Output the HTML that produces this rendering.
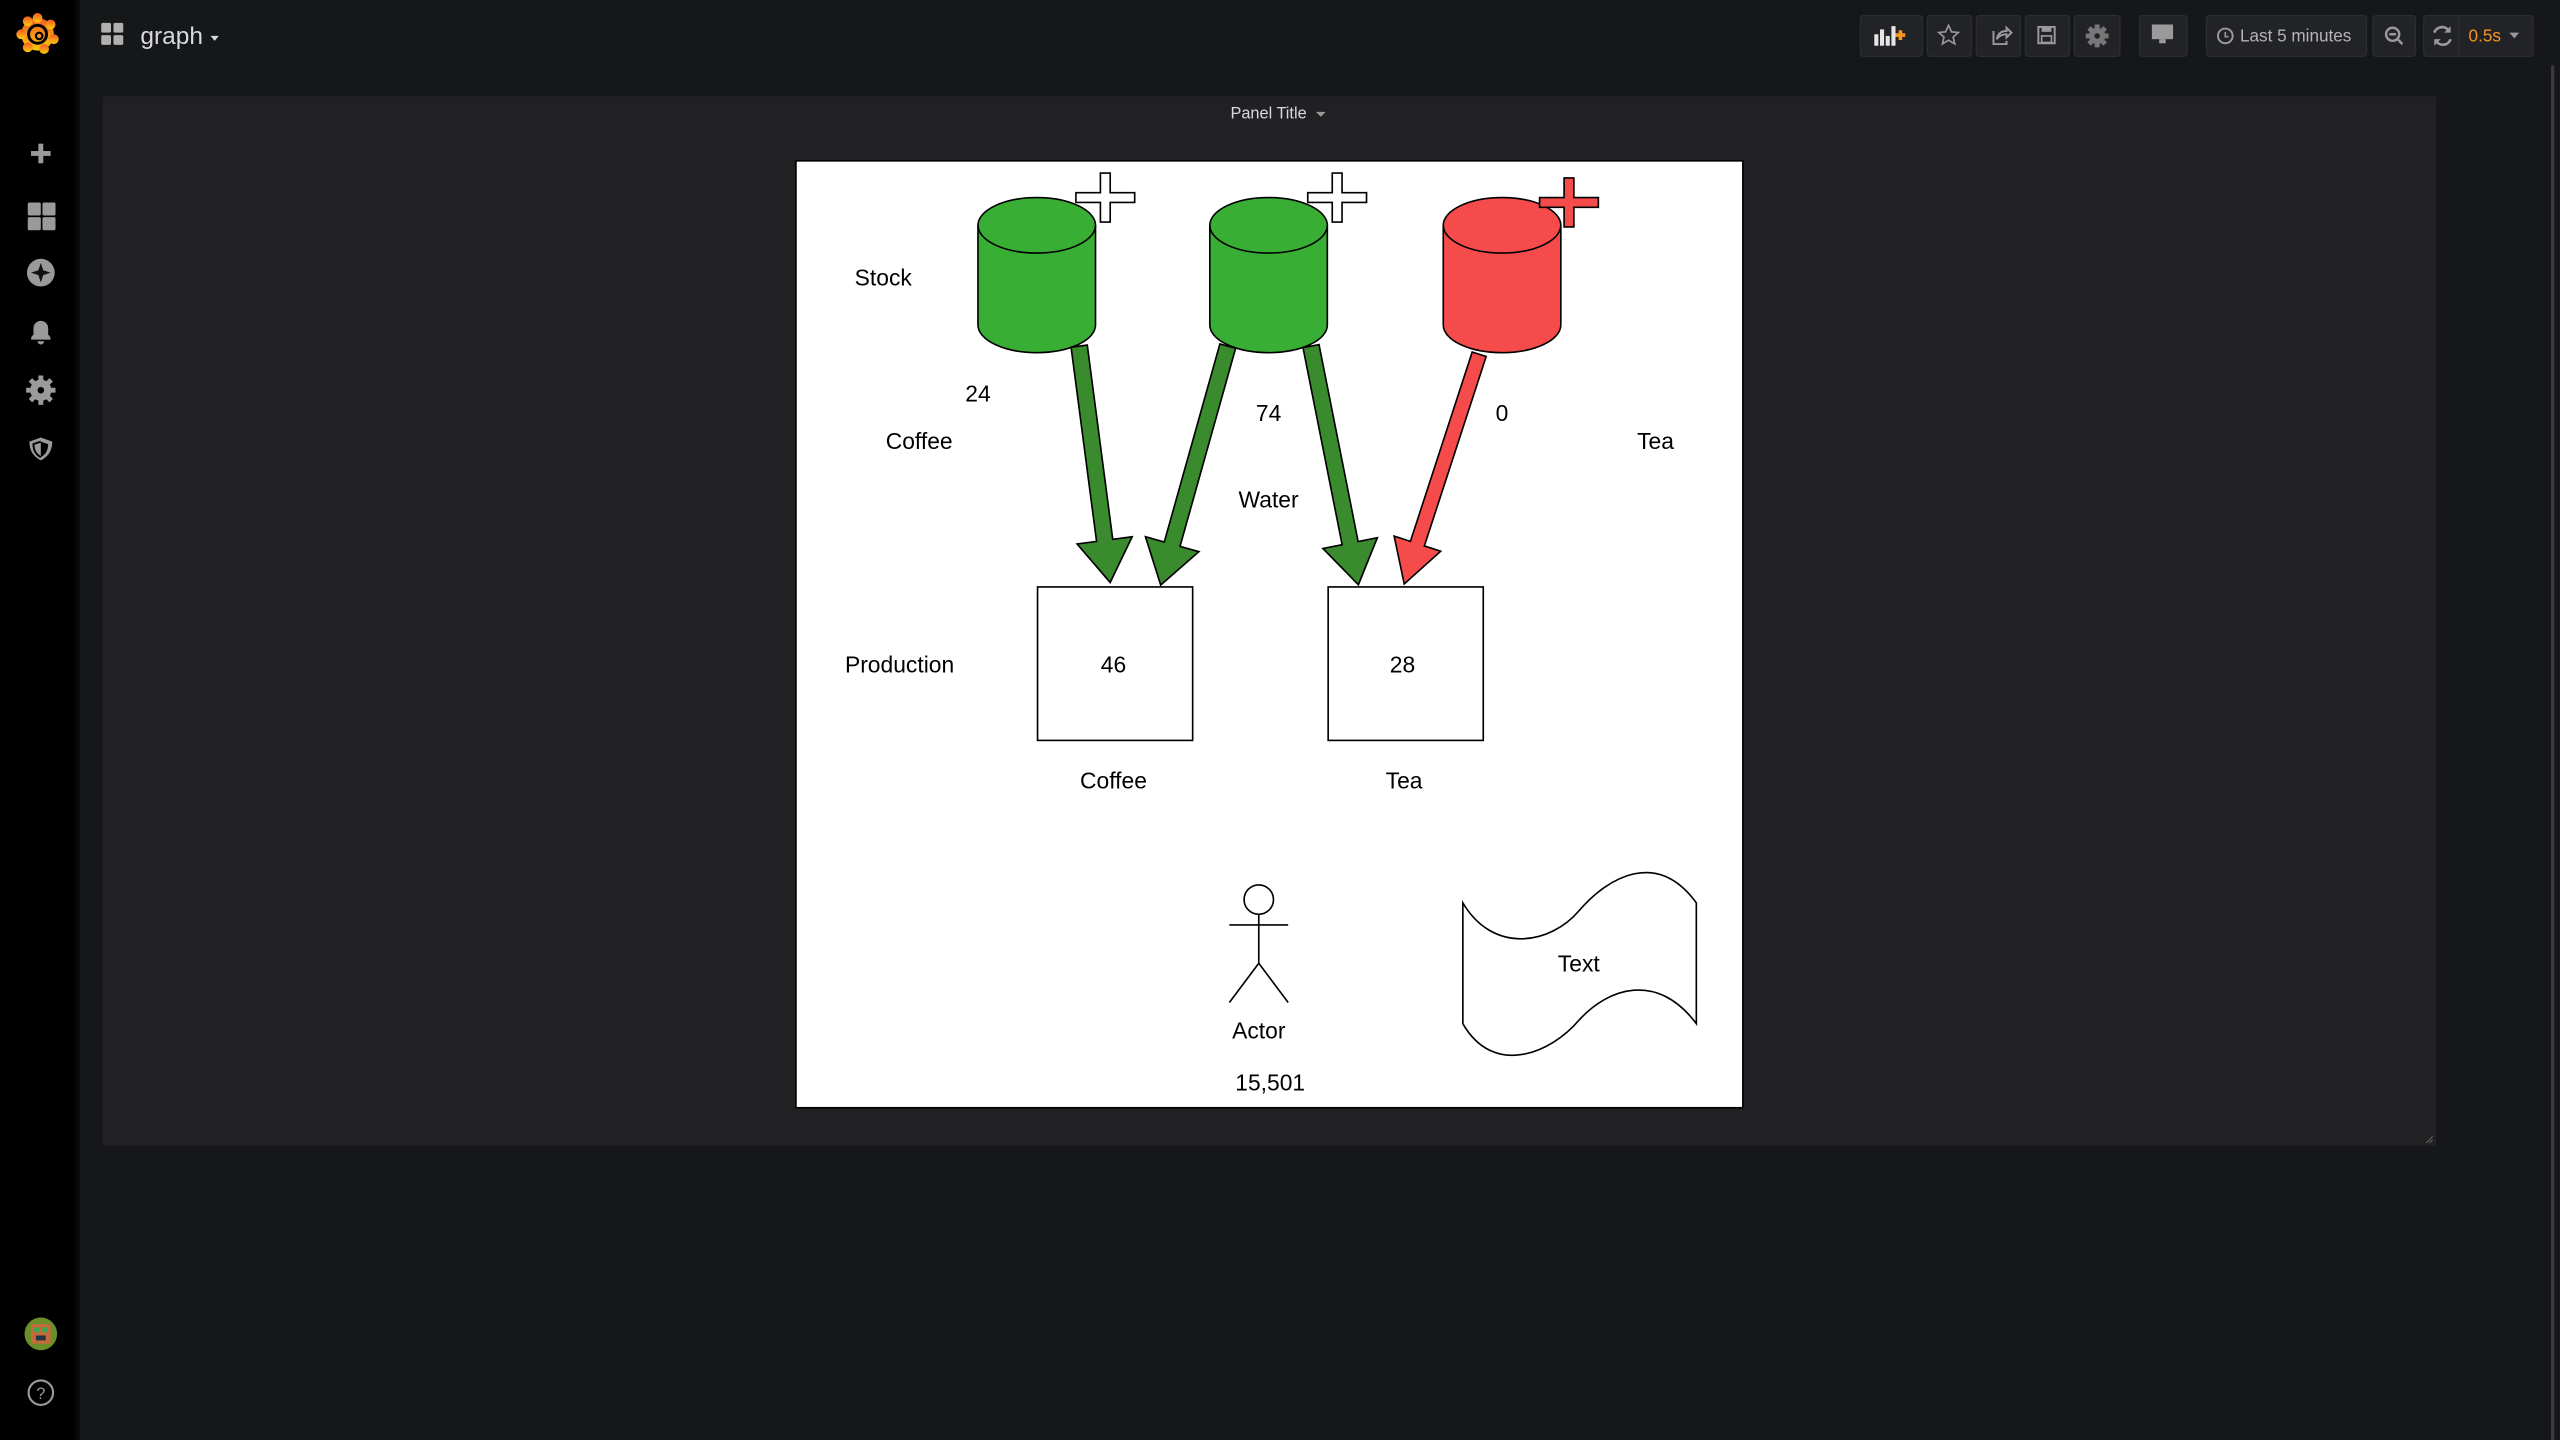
<!DOCTYPE html>
<html><head><meta charset="utf-8"><style>
html,body{margin:0;padding:0;background:#161719;width:2560px;height:1440px;overflow:hidden}
svg{display:block}
</style></head><body>
<svg width="2560" height="1440" viewBox="0 0 1568 882" xmlns="http://www.w3.org/2000/svg" font-family="Liberation Sans, sans-serif">
<defs>
<linearGradient id="sb" x1="0" x2="1"><stop offset="0.9" stop-color="#000"/><stop offset="1" stop-color="#0b0b0c"/></linearGradient>
<linearGradient id="lg" x1="0" y1="0" x2="0" y2="1"><stop offset="0" stop-color="#f05a28"/><stop offset="1" stop-color="#fbca0a"/></linearGradient>
</defs>
<rect width="1568" height="882" fill="#161719"/>
<rect width="49" height="882" fill="url(#sb)"/>
<!-- logo -->
<g transform="translate(23,21)">
<circle r="10" fill="url(#lg)"/>
<g fill="url(#lg)"><circle cx="0" cy="-10" r="3"/><circle cx="8" cy="-6" r="3"/><circle cx="10" cy="3" r="3"/><circle cx="4" cy="9" r="3"/><circle cx="-6" cy="8" r="3"/><circle cx="-10" cy="0" r="3"/><circle cx="-6" cy="-8" r="3"/></g>
<circle r="5.5" fill="none" stroke="#000" stroke-width="1.8"/>
<circle cx="1" cy="1" r="2" fill="none" stroke="#000" stroke-width="1.3"/>
</g>
<!-- sidebar icons -->
<g fill="#9a9a9a">
<rect x="23.5" y="88" width="3" height="12"/><rect x="19" y="92.5" width="12" height="3"/>
<rect x="17" y="124" width="8" height="8" rx="1"/><rect x="26" y="124" width="8" height="8" rx="1"/><rect x="17" y="133" width="8" height="8" rx="1"/><rect x="26" y="133" width="8" height="8" rx="1"/>
<circle cx="25" cy="167" r="8.5"/>
<path d="M19,208 q0,-2 1.5,-3 v-4 a4.5,4.5 0 0 1 9,0 v4 q1.5,1 1.5,3 z M23,209 h4 a2,2 0 0 1 -4,0z"/>
<circle cx="25" cy="239" r="6.5"/>
<path d="M25,268 l7,2.5 q0,8 -7,11.5 q-7,-3.5 -7,-11.5 z"/>
</g>
<path d="M25,161 l1.5,4.5 4.5,1.5 -4.5,1.5 -1.5,4.5 -1.5,-4.5 -4.5,-1.5 4.5,-1.5z" fill="#111"/>
<g fill="#9a9a9a"><rect x="23.5" y="230" width="3" height="18"/><rect x="16" y="237.5" width="18" height="3"/><rect x="23.5" y="230" width="3" height="18" transform="rotate(45 25 239)"/><rect x="23.5" y="230" width="3" height="18" transform="rotate(-45 25 239)"/></g>
<circle cx="25" cy="239" r="2" fill="#000"/>
<path d="M25,270.5 l4.5,1.5 q0,5.5 -4.5,8 z" fill="#000"/>
<path d="M25,270.5 l-4.5,1.5 q0,5.5 4.5,8" fill="none" stroke="#000" stroke-width="1.2"/>
<circle cx="25" cy="817" r="10" fill="#6a8f2a"/>
<rect x="19" y="811" width="12" height="12" fill="#c46a3b"/><rect x="21" y="813" width="3" height="3" fill="#3a5"/><rect x="26" y="813" width="3" height="3" fill="#3a5"/><rect x="22" y="818" width="6" height="3" fill="#234"/>
<circle cx="25" cy="853" r="7.5" fill="none" stroke="#9a9a9a" stroke-width="1.3"/>
<text x="25" y="857" font-size="10" fill="#9a9a9a" text-anchor="middle">?</text>
<!-- title -->
<g fill="#b0b0b0"><rect x="62" y="14" width="6" height="6" rx="1"/><rect x="69.5" y="14" width="6" height="6" rx="1"/><rect x="62" y="21.5" width="6" height="6" rx="1"/><rect x="69.5" y="21.5" width="6" height="6" rx="1"/></g>
<text x="86" y="27" font-size="15" fill="#d8d9da">graph</text>
<path d="M129,22 h5 l-2.5,3z" fill="#d8d9da"/>
<!-- toolbar -->
<g fill="#222326" stroke="#2c2d30" stroke-width="0.8">
<rect x="1139.5" y="9.5" width="38" height="25" rx="2"/>
<rect x="1180.5" y="9.5" width="27" height="25" rx="2"/>
<rect x="1210.5" y="9.5" width="27" height="25" rx="2"/>
<rect x="1240.5" y="9.5" width="27" height="25" rx="2"/>
<rect x="1270.5" y="9.5" width="28" height="25" rx="2"/>
<rect x="1310.5" y="9.5" width="29" height="25" rx="2"/>
<rect x="1351.5" y="9.5" width="98" height="25" rx="2"/>
<rect x="1453.5" y="9.5" width="26" height="25" rx="2"/>
<rect x="1484.5" y="9.5" width="67" height="25" rx="2"/>
</g>
<line x1="1506" y1="10" x2="1506" y2="34" stroke="#2c2d30"/>
<g fill="#e6e6e6"><rect x="1148" y="21" width="2.5" height="7"/><rect x="1151.5" y="18" width="2.5" height="10"/><rect x="1155" y="22" width="2.5" height="6"/><rect x="1158.5" y="16" width="2.5" height="12"/></g>
<path d="M1161,21.5 h6 M1164,18.5 v6" stroke="#f79520" stroke-width="2.2"/>
<path d="M1193.5,15.5 l1.8,4 4.2,.4 -3.2,2.8 1,4.2 -3.8,-2.3 -3.8,2.3 1,-4.2 -3.2,-2.8 4.2,-.4z" fill="none" stroke="#9a9a9a" stroke-width="1"/>
<path d="M1221,19 v8 h8 v-2 M1223,24 q1,-5 6,-5 v-2 l3,3 -3,3 v-2 q-4,0 -6,3z" fill="none" stroke="#9a9a9a" stroke-width="1.2"/>
<rect x="1248.5" y="16.5" width="10" height="10" fill="none" stroke="#9a9a9a" stroke-width="1.2"/><rect x="1250.5" y="16.5" width="6" height="3" fill="#9a9a9a"/><rect x="1250.5" y="22" width="6" height="4" fill="none" stroke="#9a9a9a"/>
<g fill="#777"><circle cx="1284.5" cy="22" r="5"/><rect x="1283" y="15" width="3" height="14"/><rect x="1277.5" y="20.5" width="14" height="3"/><rect x="1283" y="15" width="3" height="14" transform="rotate(45 1284.5 22)"/><rect x="1283" y="15" width="3" height="14" transform="rotate(-45 1284.5 22)"/></g><circle cx="1284.5" cy="22" r="1.7" fill="#222326"/>
<rect x="1318" y="15" width="13" height="9" fill="#9a9a9a"/><rect x="1322.5" y="24" width="4" height="2.5" fill="#9a9a9a"/>
<circle cx="1363" cy="22" r="4.5" fill="none" stroke="#9a9a9a" stroke-width="1.2"/><path d="M1363,19.5 v3 h2" stroke="#9a9a9a" fill="none"/>
<text x="1372" y="25.5" font-size="10.5" fill="#b4b4b4">Last 5 minutes</text>
<circle cx="1465.5" cy="21" r="4" fill="none" stroke="#9a9a9a" stroke-width="1.5"/><path d="M1463.5,21 h4 M1468.5,24 l3,3" stroke="#9a9a9a" stroke-width="1.5"/>
<path d="M1491,20 a5,5 0 0 1 9,-1 M1501,24 a5,5 0 0 1 -9,1" fill="none" stroke="#9a9a9a" stroke-width="1.6"/><path d="M1501,16 v4 h-4z M1491,28 v-4 h4z" fill="#9a9a9a"/>
<text x="1512" y="25.5" font-size="10.5" fill="#f79520">0.5s</text>
<path d="M1537,20 h6 l-3,3.5z" fill="#9a9a9a"/>
<!-- scrollbar -->
<rect x="1562.5" y="40" width="2" height="842" fill="#3a3a3d"/>
<!-- panel -->
<rect x="63" y="59" width="1429" height="643" fill="#212124"/>
<text x="777" y="72.5" font-size="10" fill="#d8d9da" text-anchor="middle">Panel Title</text>
<path d="M806,68.5 h6 l-3,3z" fill="#9a9a9a"/>
<path d="M1486,700 l4,-4 M1488,700 l2,-2" stroke="#666" stroke-width="0.6"/>
<!-- canvas -->
<rect x="487.5" y="98.5" width="580" height="580" fill="#fff" stroke="#000" stroke-width="1"/>
<g stroke="#000" stroke-width="1">
<!-- crosses -->
<path d="M674,106 h6 v12 h15 v6 h-15 v12 h-6 v-12 h-15 v-6 h15z" fill="#fff"/>
<path d="M816,106 h6 v12 h15 v6 h-15 v12 h-6 v-12 h-15 v-6 h15z" fill="#fff"/>
<!-- cylinders -->
<path d="M599,138 a36,17 0 0 1 72,0 v61 a36,17 0 0 1 -72,0z" fill="#39ae35"/>
<path d="M599,138 a36,17 0 0 0 72,0" fill="none"/>
<path d="M741,138 a36,17 0 0 1 72,0 v61 a36,17 0 0 1 -72,0z" fill="#39ae35"/>
<path d="M741,138 a36,17 0 0 0 72,0" fill="none"/>
<path d="M884,138 a36,17 0 0 1 72,0 v61 a36,17 0 0 1 -72,0z" fill="#f54b4b"/>
<path d="M884,138 a36,17 0 0 0 72,0" fill="none"/>
<path d="M958,109 h6 v12 h15 v6 h-15 v12 h-6 v-12 h-15 v-6 h15z" fill="#f54b4b"/>
<!-- arrows -->
<g fill="#3a8a2e">
<polygon transform="translate(661,212) rotate(-7.47)" points="-5,0 5,0 5,120 17,120 0,146 -17,120 -5,120"/>
<polygon transform="translate(752,212) rotate(15.68)" points="-5,0 5,0 5,126 17,126 0,152 -17,126 -5,126"/>
<polygon transform="translate(803,212) rotate(-11.23)" points="-5,0 5,0 5,123 17,123 0,149 -17,123 -5,123"/>
</g>
<polygon fill="#f54b4b" transform="translate(906,217) rotate(18.07)" points="-4.5,0 4.5,0 4.5,122 15,122 0,148 -15,122 -4.5,122"/>
<!-- boxes -->
<rect x="635.5" y="359.5" width="95" height="94" fill="#fff"/>
<rect x="813.5" y="359.5" width="95" height="94" fill="#fff"/>
<!-- actor -->
<circle cx="771" cy="551" r="9" fill="#fff"/>
<path d="M771,560 v30 M753,566.5 h36 M771,590 l-18,24 M771,590 l18,24" fill="none"/>
<!-- tape -->
<path d="M896,553 C915,585 950,578 967,558 C985,537 1015,520 1039,553 L1039,627 C1015,595 985,605 967,625 C950,645 915,660 896,627 Z" fill="#fff"/>
</g>
<g font-size="14" fill="#000" text-anchor="middle">
<text x="541" y="175">Stock</text>
<text x="599" y="246">24</text>
<text x="563" y="275">Coffee</text>
<text x="777" y="258">74</text>
<text x="920" y="258">0</text>
<text x="1014" y="275">Tea</text>
<text x="777" y="311">Water</text>
<text x="551" y="412">Production</text>
<text x="682" y="412">46</text>
<text x="859" y="412">28</text>
<text x="682" y="483">Coffee</text>
<text x="860" y="483">Tea</text>
<text x="771" y="636">Actor</text>
<text x="778" y="668">15,501</text>
<text x="967" y="595">Text</text>
</g>
</svg>
</body></html>
